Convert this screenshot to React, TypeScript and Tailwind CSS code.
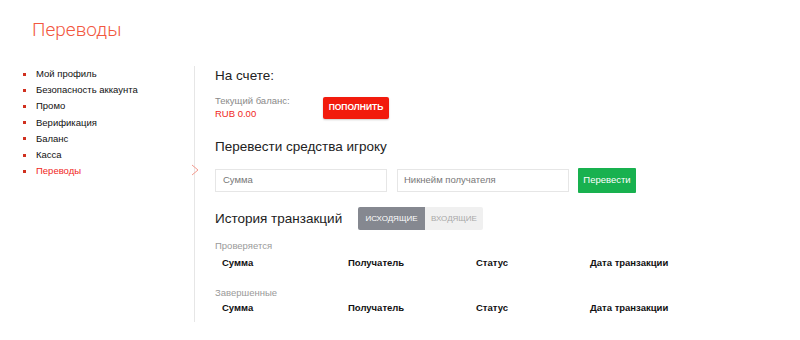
const menu = [
  "Мой профиль",
  "Безопасность аккаунта",
  "Промо",
  "Верификация",
  "Баланс",
  "Касса",
  "Переводы",
];

function TxHeader() {
  return (
    <div className="flex pl-[7px] text-[9.5px] font-bold text-[#111] leading-[12px]">
      <div className="w-[126px]">Сумма</div>
      <div className="w-[128px]">Получатель</div>
      <div className="w-[114px]">Статус</div>
      <div>Дата транзакции</div>
    </div>
  );
}

export default function App() {
  return (
    <div className="w-[800px] h-[340px] bg-white font-['Liberation_Sans',Arial,sans-serif] text-[#222] overflow-hidden">
      {/* Page title */}
      <h1 className="pl-[32px] pt-[18px] text-[19px] leading-[24px] font-light font-['Roboto',sans-serif] text-[#f2573f]">
        Переводы
      </h1>

      <div className="flex mt-[24px]">
        {/* Sidebar */}
        <div className="relative w-[195px] h-[256px] border-r border-[#e6e6e6]">
          <ul className="pl-[23px]">
            {menu.map((item) => (
              <li
                key={item}
                className={`flex items-center h-[16.2px] text-[9.5px] ${
                  item === "Переводы" ? "text-[#f0261c]" : "text-[#111]"
                }`}
              >
                <span className="w-[3px] h-[3px] bg-[#d0301f] mr-[10px]" />
                {item}
              </li>
            ))}
          </ul>
          {/* Active chevron */}
          <svg
            className="absolute right-[-5px] top-[98px]"
            width="8"
            height="12"
            viewBox="0 0 8 12"
            fill="none"
          >
            <path d="M1 1l6 5-6 5" stroke="#f59a8e" strokeWidth="1" />
          </svg>
        </div>

        {/* Main */}
        <div className="pl-[20px] pt-[1px]">
          <h2 className="text-[13.5px] leading-[18px]">На счете:</h2>
          <div className="flex items-center mt-[10px]">
            <div className="w-[108px]">
              <div className="text-[9.5px] leading-[12px] text-[#8a8a8a]">Текущий баланс:</div>
              <div className="text-[9.5px] leading-[13px] text-[#f0261c]">RUB 0.00</div>
            </div>
            <button className="w-[66px] h-[22px] bg-[#f21b0d] text-white text-[8.5px] font-bold rounded-[2px] shadow-[0_1px_2px_rgba(0,0,0,0.2)]">
              ПОПОЛНИТЬ
            </button>
          </div>

          <h2 className="text-[13.5px] leading-[18px] mt-[18px]">Перевести средства игроку</h2>
          <div className="flex items-center mt-[12px]">
            <div className="w-[172px] h-[23px] border border-[#e6e6e6] flex items-center pl-[7px] text-[9.5px] text-[#777]">
              Сумма
            </div>
            <div className="ml-[10px] w-[172px] h-[23px] border border-[#e6e6e6] flex items-center pl-[6px] text-[9.5px] text-[#777]">
              Никнейм получателя
            </div>
            <button className="ml-[9px] w-[58px] h-[25px] bg-[#18b14f] text-white text-[9.5px] rounded-[1px]">
              Перевести
            </button>
          </div>

          <div className="flex items-center mt-[14px]">
            <h2 className="text-[13.5px] leading-[18px] w-[143px] whitespace-nowrap">История транзакций</h2>
            <div className="flex h-[23px] text-[8px] rounded-[2px] overflow-hidden">
              <div className="w-[67px] bg-[#858890] text-white flex items-center justify-center">ИСХОДЯЩИЕ</div>
              <div className="w-[58px] bg-[#f0f0f0] text-[#a8a8a8] flex items-center justify-center">ВХОДЯЩИЕ</div>
            </div>
          </div>

          <div className="text-[9.5px] leading-[12px] text-[#9a9a9a] mt-[10px]">Проверяется</div>
          <div className="mt-[5px]">
            <TxHeader />
          </div>

          <div className="text-[9.5px] leading-[12px] text-[#9a9a9a] mt-[18px]">Завершенные</div>
          <div className="mt-[3px]">
            <TxHeader />
          </div>
        </div>
      </div>
    </div>
  );
}
